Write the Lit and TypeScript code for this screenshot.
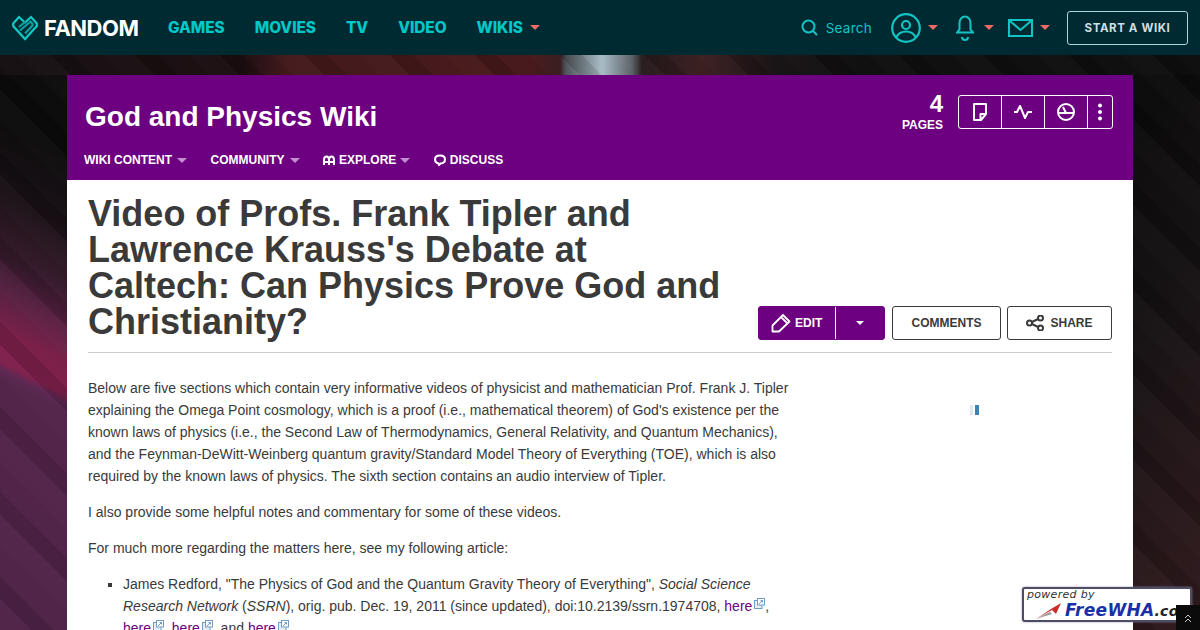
import { LitElement, html, css, svg } from "lit";
import { customElement } from "lit/decorators.js";

const caret = (cls = "") => html`<span class="caret ${cls}"></span>`;
const ext = svg`<svg class="ext" width="11" height="11" viewBox="0 0 11 11" fill="none" stroke="#6f9cc6" stroke-width="1"><rect x="0.5" y="2.5" width="7.500" height="8" fill="#e6eff7"/><rect x="3.500" y="0.500" width="7" height="6.500" fill="#fff"/><path d="M5 6l3.500-3.500M6.500 2.500h2v2"/></svg>`;

@customElement("app-root")
export class AppRoot extends LitElement {
  static styles = css`
    :host { display: block; position: relative; width: 1200px; height: 630px; overflow: hidden; font-family: "Liberation Sans", Arial, sans-serif; background-color: #0c0b0c; }
    .bg { position: absolute; inset: 0;
      background:
        repeating-linear-gradient(45deg, rgba(255,255,255,.02) 0 22px, rgba(0,0,0,.1) 22px 38px, rgba(255,255,255,.008) 38px 60px),
        linear-gradient(90deg, transparent 560px, #4d5358 566px, #a9bcc6 602px, #5a6065 632px, transparent 642px) 0 55px / 100% 20px no-repeat,
        linear-gradient(90deg, #161012 0, #1a0d10 240px, #43181b 290px, #47181b 530px, #2a1a1c 580px, #241a1c 640px, #3b1e20 700px, #171214 780px, #0f0e0f 860px) 0 55px / 100% 20px no-repeat,
        linear-gradient(27deg, #4f2248 0, #53234a 225px, #5a2450 232px, #7e1f4a 240px, #7a1f48 268px, #5a2042 300px, #361a2c 335px, #1a1016 390px, transparent 450px),
        linear-gradient(315deg, #301b1f 0, #2a181b 70px, #151113 260px, transparent 400px),
        #0c0b0c; }
    .top { position: relative; height: 55px; background: #002a32; display: flex; align-items: center; padding: 0 12px; box-sizing: border-box; }
    .logo { display: flex; align-items: center; gap: 6px; width: 156px; color: #fff; font: 700 22px Inter, sans-serif; letter-spacing: -0.5px; }
    .nav { display: flex; align-items: center; gap: 30px; font: 800 15.400px Inter, sans-serif; color: #00c8c8; letter-spacing: -0.05px; }
    .nav span.i { display: flex; align-items: center; gap: 7px; }
    .caret { display: inline-block; width: 0; height: 0; border-left: 5px solid transparent; border-right: 5px solid transparent; border-top: 5px solid #ee6a62; }
    .caret.pale { border-top-color: #c48fd0; }
    .right { margin-left: auto; display: flex; align-items: center; }
    .search { display: flex; align-items: center; gap: 8px; color: #12c4c4; font: 400 13.500px Inter, sans-serif; letter-spacing: .25px; margin-right: 19px; }
    .ic { display: flex; align-items: center; gap: 7px; }
    .ic.a { margin-right: 18px; }
    .ic.b { gap: 10px; margin-right: 14px; }
    .ic.c { margin-right: 17px; }
    .start { width: 121px; height: 34px; box-sizing: border-box; border: 1px solid #a4dcdc; border-radius: 3px; color: #cfdfe0; font: 700 11.500px Inter, sans-serif; letter-spacing: .6px; display: flex; align-items: center; justify-content: center; }
    .wrap { position: relative; margin: 20px 67px 0; background: #fff; }
    .head { height: 105px; background: #6c0080; color: #fff; position: relative; box-sizing: border-box; padding: 0 20px 0 17px; display: flex; flex-direction: column; }
    .hrow { display: flex; align-items: flex-start; height: 71px; }
    .wn { font: 700 28px/1 "Liberation Sans", sans-serif; margin: 28px 0 0 1px; }
    .count { margin-left: auto; text-align: right; margin-top: 18px; margin-right: 15px; }
    .count b { display: block; font: 700 24px/22px "Liberation Sans", sans-serif; }
    .count small { display: block; font: 700 12px/16px "Liberation Sans", sans-serif; margin-top: 2px; }
    .tools { margin-top: 20px; display: flex; height: 34px; box-sizing: border-box; border: 1px solid #fff; border-radius: 3px; }
    .tools div { width: 42px; display: flex; align-items: center; justify-content: center; border-right: 1px solid #fff; }
    .tools div:last-child { width: 24px; border-right: 0; }
    .wnav { display: flex; align-items: center; gap: 23.500px; font: 700 12px/16px "Liberation Sans", sans-serif; height: 18px; margin-top: 5px; }
    .wnav span.i { display: flex; align-items: center; gap: 5px; }
    .wnav span.i.w { gap: 4px; }
    .main { padding: 16px 21px 0; color: #3a3a3a; }
    .ah { display: flex; justify-content: space-between; align-items: flex-end; border-bottom: 1px solid #ccc; padding-bottom: 12px; }
    h1 { margin: 0; font: 700 36px/36px "Liberation Sans", sans-serif; color: #3a3a3a; }
    .btns { display: flex; gap: 6px; }
    .btn { height: 34px; box-sizing: border-box; border: 1px solid #3a3a3a; border-radius: 3px; display: flex; align-items: center; justify-content: center; font: 700 12px "Liberation Sans", sans-serif; gap: 6px; }
    .edit { background: #6c0080; border-color: #6c0080; color: #fff; width: 127px; margin-right: 1px; justify-content: flex-start; gap: 0; }
    .edit .a { width: 77px; height: 100%; display: flex; align-items: center; gap: 4px; padding-left: 12px; box-sizing: border-box; border-right: 1px solid #fff; }
    .edit .b { flex: 1; display: flex; align-items: center; justify-content: center; }
    .edit .caret { border-top-color: #fff; border-left-width: 4px; border-right-width: 4px; border-top-width: 4px; }
    .c2 { width: 109px; }
    .c3 { width: 105px; }
    .body { width: 710px; font-size: 14px; line-height: 22px; padding-top: 24px; }
    p { margin: 0 0 14px; }
    ul { margin: 0; padding: 0 0 0 35px; list-style: square; }
    a { color: #6c0080; text-decoration: none; }
    .ext { margin-left: 2px; vertical-align: 2px; }
    .load { position: absolute; left: 903px; top: 330px; display: flex; gap: 2px; }
    .load i { display: block; width: 3px; height: 10px; background: #dfe9f2; }
    .load i + i { width: 4px; background: #3c84b6; }
    .wha { position: absolute; left: 1022px; top: 587px; width: 170px; height: 35px; box-sizing: border-box; background: #fff; border: 2px solid #4d4d66; border-radius: 3px; box-shadow: 0 0 2px #8a8aa0; overflow: hidden; }
    .wha .p { position: absolute; left: 3px; top: 0; font: 400 11px/12px "DejaVu Sans", sans-serif; color: #333; font-style: italic; letter-spacing: .3px; }
    .wha .f { position: absolute; left: 41px; top: 11px; font: italic 700 17px/20px "DejaVu Sans", sans-serif; color: #1a2fa8; white-space: nowrap; letter-spacing: .3px; }
    .wha .f span { color: #222; font-size: 14px; }
    .wha svg { position: absolute; left: 12px; top: 11px; }
    .up { position: absolute; left: 1176px; top: 605px; width: 24px; height: 25px; background: #0b0b0b; display: flex; align-items: center; justify-content: center; }
  `;
  render() {
    return html`
      <div class="bg"></div>
      <div class="top">
        <div class="logo">
          <svg width="26" height="26" viewBox="0 0 26 26" fill="none" stroke="#12c8c4" stroke-width="2.200" stroke-linejoin="miter"><path d="M1.200 8.500L7 2l6 5.500L19 2l5.800 6.500V11L13 24 1.200 11z"/><path d="M7 12l6.500-5.500M13 18.500l7.500-8V9l-2-2.500L8 15.500" stroke="#0b9f9f"/></svg>
          <span>FANDOM</span>
        </div>
        <div class="nav">
          <span class="i">GAMES</span><span class="i">MOVIES</span><span class="i">TV</span><span class="i">VIDEO</span>
          <span class="i">WIKIS ${caret()}</span>
        </div>
        <div class="right">
          <div class="search">
            <svg width="17" height="17" viewBox="0 0 17 17" fill="none" stroke="#12c4c4" stroke-width="2"><circle cx="7.500" cy="7.500" r="6"/><path d="M12 12l4 4"/></svg>
            <span>Search</span>
          </div>
          <div class="ic a">
            <svg width="30" height="30" viewBox="0 0 30 30" fill="none" stroke="#12c4c4" stroke-width="2.200"><circle cx="15" cy="15" r="13.800"/><circle cx="15" cy="12" r="4"/><path d="M5.500 24c2-4 5.500-5.500 9.500-5.500s7.500 1.500 9.500 5.500"/></svg>
            ${caret()}
          </div>
          <div class="ic b">
            <svg width="18" height="27" viewBox="0 0 18 27" fill="none" stroke="#12c4c4" stroke-width="2"><path d="M1 18.500h16l-2.500-3V9a5.500 6.500 0 0 0-11 0v6.500z"/><path d="M6 23a3 3 0 0 0 6 0"/></svg>
            ${caret()}
          </div>
          <div class="ic c">
            <svg width="25" height="20" viewBox="0 0 25 20" fill="none" stroke="#12c4c4" stroke-width="2"><rect x="1" y="2" width="23" height="16"/><path d="M2 3l10.500 9L23 3"/></svg>
            ${caret()}
          </div>
          <div class="start">START A WIKI</div>
        </div>
      </div>
      <div class="wrap">
        <div class="head">
          <div class="hrow">
            <div class="wn">God and Physics Wiki</div>
            <div class="count"><b>4</b><small>PAGES</small></div>
            <div class="tools">
              <div><svg width="16" height="18" viewBox="0 0 16 18" fill="none" stroke="#fff" stroke-width="2" stroke-linejoin="round"><path d="M2 1h12v10l-5 6H2zM8.500 16.500V11H14"/></svg></div>
              <div><svg width="20" height="16" viewBox="0 0 20 16" fill="none" stroke="#fff" stroke-width="2" stroke-linejoin="round"><path d="M1 8h3l3-6 5 12 3-6h4"/></svg></div>
              <div><svg width="18" height="18" viewBox="0 0 18 18" fill="none" stroke="#fff" stroke-width="2"><circle cx="9" cy="9" r="8"/><path d="M1 10h16M6 4l3 6"/></svg></div>
              <div><svg width="4" height="18" viewBox="0 0 4 18" fill="#fff"><circle cx="2" cy="2.500" r="2"/><circle cx="2" cy="9" r="2"/><circle cx="2" cy="15.500" r="2"/></svg></div>
            </div>
          </div>
          <div class="wnav">
            <span class="i">WIKI CONTENT ${caret("pale")}</span>
            <span class="i">COMMUNITY ${caret("pale")}</span>
            <span class="i w"><svg width="12" height="10" viewBox="0 0 12 10" fill="none" stroke="#fff" stroke-width="2"><path d="M1 10V5a2.500 3.500 0 0 1 5 0v5M6 10V5a2.500 3.500 0 0 1 5 0v5M1 7h10"/></svg><span>EXPLORE</span>${caret("pale")}</span>
            <span class="i w"><svg width="12" height="12" viewBox="0 0 12 12" fill="none" stroke="#fff" stroke-width="2"><path d="M4.500 9.500C2.500 9 1 7.500 1 5.500 1 3 3.200 1.500 6 1.500s5 1.500 5 4c0 2.200-2 3.800-4.500 4L5 11z"/></svg><span>DISCUSS</span></span>
          </div>
        </div>
        <div class="main">
          <div class="ah">
            <h1>Video of Profs. Frank Tipler and<br>Lawrence Krauss's Debate at<br>Caltech: Can Physics Prove God and<br>Christianity?</h1>
            <div class="btns">
              <div class="btn edit">
                <div class="a"><svg width="20" height="20" viewBox="0 0 20 20" fill="none" stroke="#fff" stroke-width="1.800" stroke-linejoin="round"><path d="M1.500 18.500v-6L12 2l6.500 6.500L8 18.500zM10 4l6.500 6.500"/></svg>EDIT</div>
                <div class="b">${caret()}</div>
              </div>
              <div class="btn c2">COMMENTS</div>
              <div class="btn c3"><svg width="18" height="16" viewBox="0 0 18 16" fill="none" stroke="#3a3a3a" stroke-width="2"><circle cx="3.500" cy="8" r="2.500"/><circle cx="14.500" cy="3" r="2.500"/><circle cx="14.500" cy="13" r="2.500"/><path d="M6 7l6-3M6 9l6 3"/></svg>SHARE</div>
            </div>
          </div>
          <div class="body">
            <p>Below are five sections which contain very informative videos of physicist and mathematician Prof. Frank J. Tipler explaining the Omega Point cosmology, which is a proof (i.e., mathematical theorem) of God's existence per the known laws of physics (i.e., the Second Law of Thermodynamics, General Relativity, and Quantum Mechanics), and the Feynman-DeWitt-Weinberg quantum gravity/Standard Model Theory of Everything (TOE), which is also required by the known laws of physics. The sixth section contains an audio interview of Tipler.</p>
            <p>I also provide some helpful notes and commentary for some of these videos.</p>
            <p>For much more regarding the matters here, see my following article:</p>
            <ul><li>James Redford, "The Physics of God and the Quantum Gravity Theory of Everything", <i>Social Science Research Network</i> (<i>SSRN</i>), orig. pub. Dec. 19, 2011 (since updated), doi:10.2139/ssrn.1974708, <a href="#">here</a>${ext}, <a href="#">here</a>${ext}, <a href="#">here</a>${ext}, and <a href="#">here</a>${ext}.</li></ul>
          </div>
        </div>
        <div class="load"><i></i><i></i></div>
      </div>
      <div class="wha">
        <span class="p">powered by</span>
        <svg width="26" height="20" viewBox="0 0 26 20"><path d="M0 19L15 9 25 3 20 14 16 10z" fill="#c9302c"/><path d="M0 19l14-7 2 2z" fill="#999"/></svg>
        <span class="f">FreeWHA<span>.com</span></span>
      </div>
      <div class="up"><svg width="8" height="10" viewBox="0 0 8 10" fill="none" stroke="#ccc" stroke-width="1"><path d="M1 5l3-3 3 3M1 9l3-3 3 3"/></svg></div>
    `;
  }
}
